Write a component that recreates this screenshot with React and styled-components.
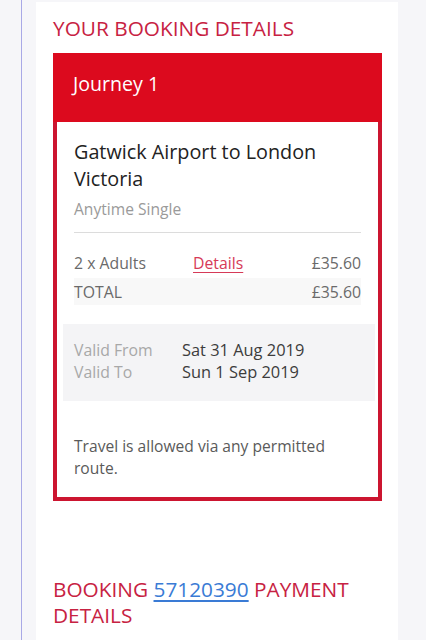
import React from "react";
import styled, { createGlobalStyle } from "styled-components";

const Global = createGlobalStyle`
  html, body { margin: 0; padding: 0; background: #f6f6f9; }
  body { font-family: "Open Sans", "Lato", sans-serif; }
`;

const Page = styled.div`
  display: flex;
  min-height: 640px;
  background: #f6f6f9;
`;

const Gutter = styled.div`
  width: 21px;
  flex: none;
  border-right: 1px solid #a9a9e6;
  margin-right: 14px;
`;

const Panel = styled.main`
  width: 362px;
  flex: none;
  background: #fff;
  margin-top: 2px;
  padding: 13px 16px 0 17px;
  box-sizing: border-box;
`;

const SectionTitle = styled.h2`
  margin: 0;
  font-size: 20.8px;
  line-height: 26.3px;
  font-weight: 400;
  color: #c72242;
  margin-top: ${(p) => p.$top || 0}px;
`;

const Card = styled.section`
  margin-top: 12px;
  border: 4px solid #cc1530;
  border-top: none;
  background: #fff;
`;

const CardHeader = styled.div`
  background: #dc0a1e;
  margin: 0 -4px;
  height: 69px;
  padding: 18px 20px 0;
  box-sizing: border-box;
  color: #fff;
  font-size: 19.6px;
  line-height: 26px;
`;

const CardBody = styled.div`
  padding: 17px 17px 17px 17px;
`;

const Route = styled.h3`
  margin: 0;
  font-size: 19.8px;
  line-height: 26.4px;
  font-weight: 400;
  color: #222;
`;

const Ticket = styled.div`
  margin-top: 6px;
  font-size: 15.6px;
  line-height: 22px;
  color: #9a9a9a;
  padding-bottom: 12px;
  border-bottom: 1px solid #dcdcdc;
`;

const PriceRow = styled.div`
  display: grid;
  grid-template-columns: 119px 1fr auto;
  height: 27px;
  align-items: center;
  font-size: 15.8px;
  color: #6a6a6a;
  margin-top: ${(p) => p.$top || 0}px;
  background: ${(p) => (p.$shaded ? "#f8f8f8" : "transparent")};
`;

const DetailsLink = styled.a`
  color: #d63a58;
  text-decoration: underline;
  text-underline-offset: 3px;
`;

const ValidBox = styled.div`
  margin: 19px -14px 0 -11px;
  background: #f4f4f6;
  padding: 15px 11px 17px;
  display: grid;
  grid-template-columns: 108px 1fr;
  font-size: 15.8px;
  line-height: 22.3px;
`;

const ValidLabel = styled.span`
  color: #a8a8a8;
`;

const ValidValue = styled.span`
  color: #3c3c3c;
  font-size: 16.4px;
`;

const Note = styled.p`
  margin: 34px 0 0;
  font-size: 15.6px;
  line-height: 22.7px;
  color: #5a5a5a;
`;

const BookingLink = styled.a`
  color: #3a7bd5;
  text-decoration: underline;
  text-underline-offset: 3px;
`;

export default function App() {
  return (
    <>
      <Global />
      <Page>
        <Gutter />
        <Panel>
          <SectionTitle>YOUR BOOKING DETAILS</SectionTitle>
          <Card>
            <CardHeader>Journey 1</CardHeader>
            <CardBody>
              <Route>Gatwick Airport to London Victoria</Route>
              <Ticket>Anytime Single</Ticket>
              <PriceRow $top={16}>
                <span>2 x Adults</span>
                <span>
                  <DetailsLink href="#">Details</DetailsLink>
                </span>
                <span>£35.60</span>
              </PriceRow>
              <PriceRow $top={2} $shaded>
                <span>TOTAL</span>
                <span />
                <span>£35.60</span>
              </PriceRow>
              <ValidBox>
                <ValidLabel>Valid From</ValidLabel>
                <ValidValue>Sat 31 Aug 2019</ValidValue>
                <ValidLabel>Valid To</ValidLabel>
                <ValidValue>Sun 1 Sep 2019</ValidValue>
              </ValidBox>
              <Note>Travel is allowed via any permitted route.</Note>
            </CardBody>
          </Card>
          <SectionTitle $top={75}>
            <span>BOOKING</span> <BookingLink href="#">57120390</BookingLink>{" "}
            <span>PAYMENT</span> <span>DETAILS</span>
          </SectionTitle>
        </Panel>
      </Page>
    </>
  );
}
